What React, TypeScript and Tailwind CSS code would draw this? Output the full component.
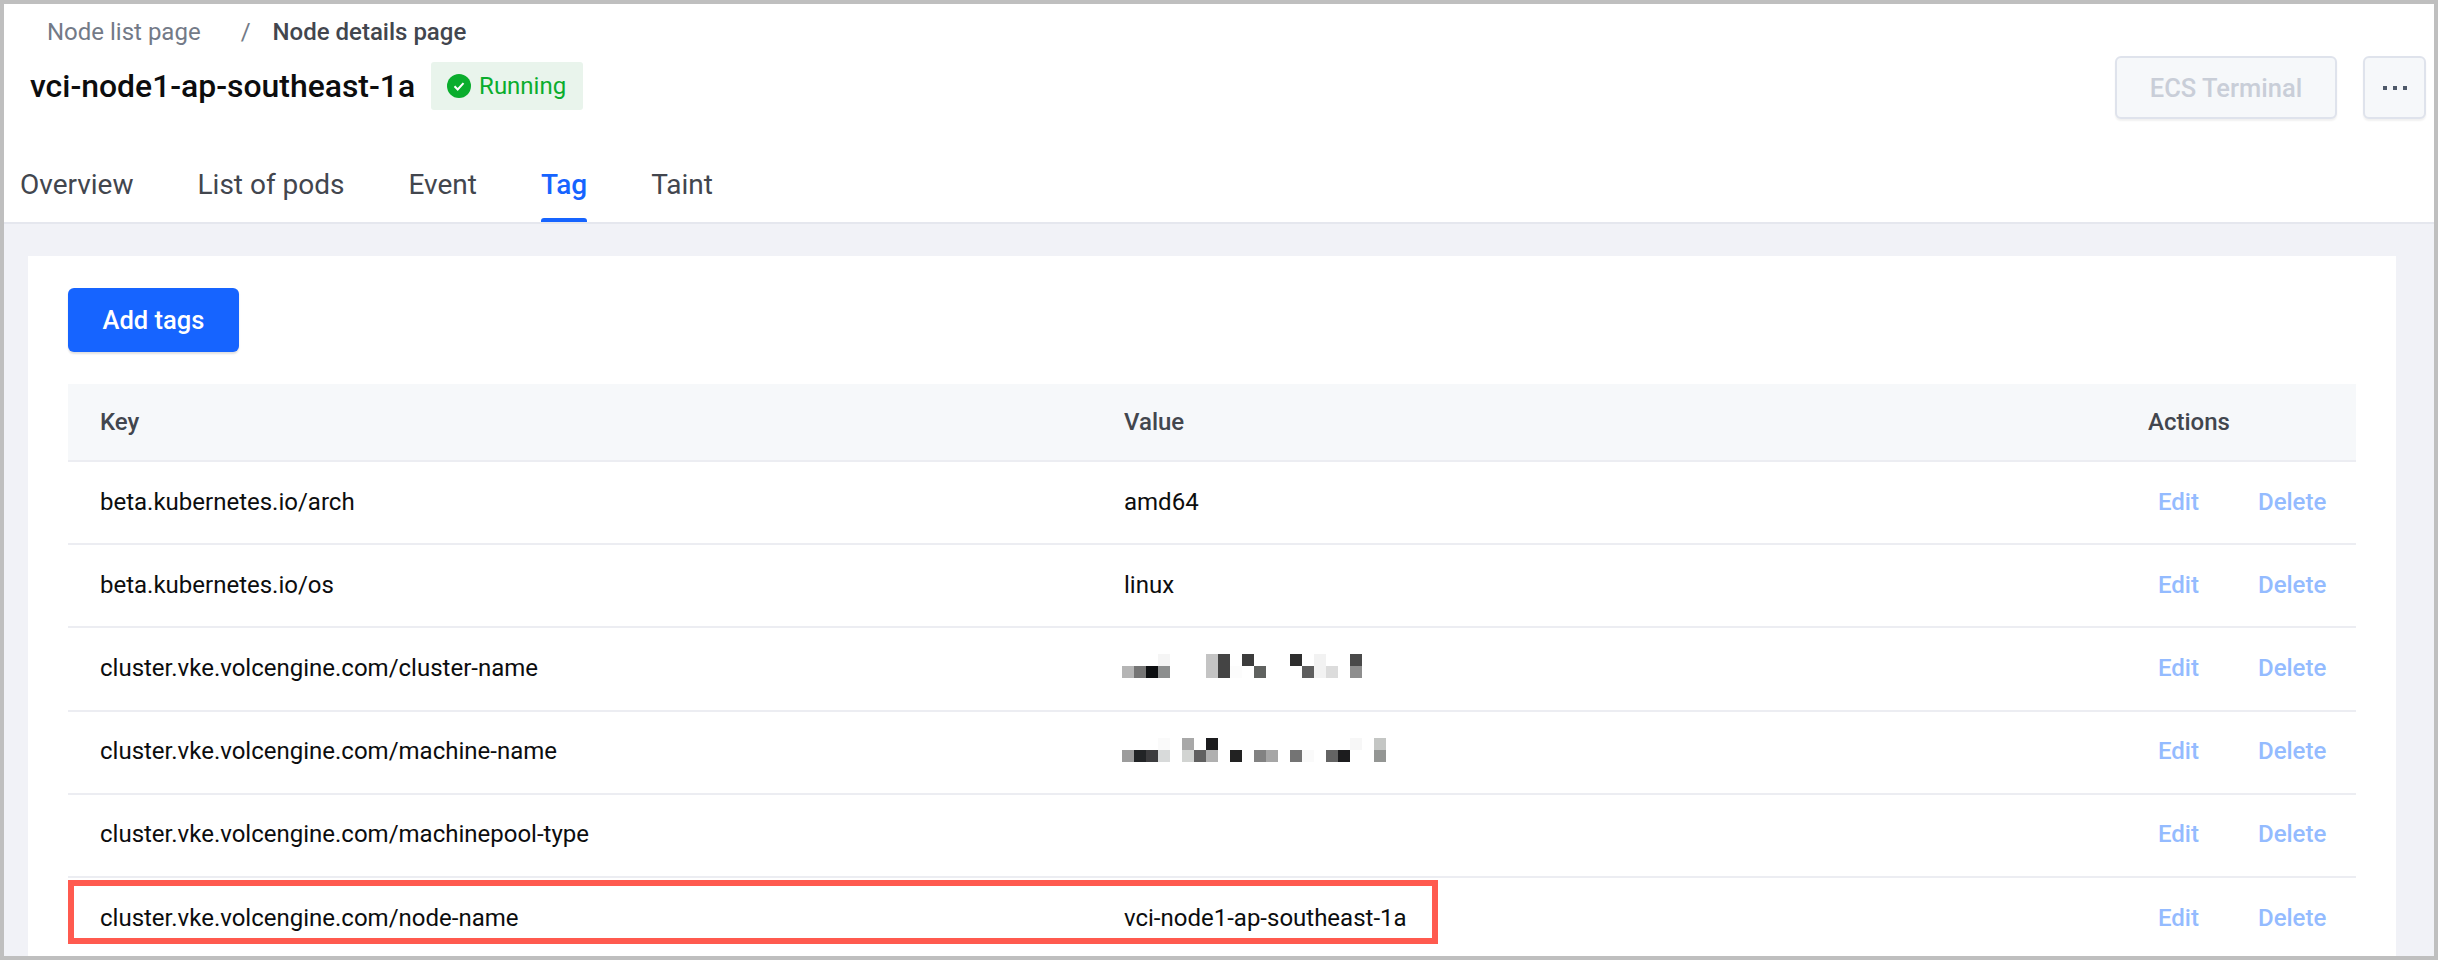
const rows = [
  { key: "beta.kubernetes.io/arch", value: "amd64" },
  { key: "beta.kubernetes.io/os", value: "linux" },
  { key: "cluster.vke.volcengine.com/cluster-name", mosaic: "a" },
  { key: "cluster.vke.volcengine.com/machine-name", mosaic: "b" },
  { key: "cluster.vke.volcengine.com/machinepool-type", value: "" },
  { key: "cluster.vke.volcengine.com/node-name", value: "vci-node1-ap-southeast-1a", marked: true },
]

// blurred values: [column, row, grey]
const mosaics: Record<string, [number, number, string][]> = {
  a: [
    [3, 0, "#f5f5f5"], [7, 0, "#c4c4c4"], [8, 0, "#444444"], [10, 0, "#3c3c3c"], [14, 0, "#2e2e2e"], [16, 0, "#f2f2f2"], [19, 0, "#4a4a4a"],
    [0, 1, "#b5b5b5"], [1, 1, "#757575"], [2, 1, "#0d0f11"], [3, 1, "#8c8e8e"], [7, 1, "#c4c4c4"], [8, 1, "#444444"], [9, 1, "#fcfcfc"],
    [11, 1, "#606260"], [15, 1, "#5e5e5e"], [16, 1, "#f2f2f2"], [17, 1, "#dcdcdc"], [19, 1, "#8e8e8e"],
  ],
  b: [
    [3, 0, "#fafafa"], [5, 0, "#a8a8a8"], [7, 0, "#1c1c1e"], [19, 0, "#f7f7f7"], [21, 0, "#c4c6c4"],
    [0, 1, "#9c9c9c"], [1, 1, "#222426"], [2, 1, "#3c3c3e"], [3, 1, "#d8dada"], [5, 1, "#d2d4d2"], [6, 1, "#606060"], [7, 1, "#b0b0b0"],
    [9, 1, "#222222"], [11, 1, "#828282"], [12, 1, "#a6a6a6"], [14, 1, "#747474"], [15, 1, "#fafafa"], [17, 1, "#646464"], [18, 1, "#1c1c1e"], [21, 1, "#949694"],
  ],
}

function Mosaic({ name }: { name: string }) {
  return (
    <svg width="264" height="24" viewBox="0 0 264 24" shapeRendering="crispEdges" className="-mt-[3px] -ml-[2px] block">
      {mosaics[name].map(([c, r, fill]) => (
        <rect key={c + "-" + r} x={c * 12} y={r * 12} width="12" height="12" fill={fill} />
      ))}
    </svg>
  )
}

const tabs = ["Overview", "List of pods", "Event", "Tag", "Taint"]

export default function App() {
  return (
    <div className="h-[960px] overflow-hidden border-4 border-[#bfbfbf] bg-[#f1f2f7] font-['Roboto',sans-serif]">
      <header className="relative h-[220px] border-b-2 border-[#e5e7ee] bg-white">
        <nav className="flex h-[44px] items-center pt-[12px] pl-[43px] text-[24px] leading-[32px]">
          <span className="text-[#737a87]">Node list page</span>
          <span className="ml-[40px] text-[#737a87]">/</span>
          <span className="ml-[22px] font-medium text-[#42464e]">Node details page</span>
        </nav>
        <div className="mt-[14px] flex items-center pl-[26px]">
          <h1 className="text-[31.9px] leading-[48px] font-medium text-[#0c0d0e]">vci-node1-ap-southeast-1a</h1>
          <span className="ml-[16px] flex h-[48px] w-[152px] items-center gap-[8px] rounded-[3px] bg-[#e9f4ec] pl-[16px] text-[24px] text-[#0aad2d]">
            <svg width="24" height="24" viewBox="0 0 24 24" className="shrink-0">
              <circle cx="12" cy="12" r="12" fill="#0aad2d" />
              <path d="M7.5 12.3l3.2 3.2 5.8-6.4" fill="none" stroke="#fff" strokeWidth="2" />
            </svg>
            Running
          </span>
          <div className="absolute top-[52px] right-[8px] flex gap-[26px]">
            <button className="h-[63px] w-[222px] rounded-[6px] border-2 border-[#dfe3ec] bg-[#f6f8fa] pt-[1px] text-[25.5px] font-medium text-[#c9ced8] shadow-[0_2px_2px_rgba(0,0,0,0.06)]">
              ECS Terminal
            </button>
            <button className="flex h-[63px] w-[63px] items-center justify-center gap-[6px] rounded-[6px] border-2 border-[#dfe3ec] bg-[#f6f8fa] shadow-[0_2px_2px_rgba(0,0,0,0.06)]">
              <span className="size-[4px] bg-[#4e5969]" />
              <span className="size-[4px] bg-[#4e5969]" />
              <span className="size-[4px] bg-[#4e5969]" />
            </button>
          </div>
        </div>
        <div className="absolute bottom-0 left-[16px] flex gap-[64px]">
          {tabs.map((t) => (
            <div
              key={t}
              className={
                t === "Tag"
                  ? "relative h-[64px] text-[28px] leading-[53px] font-medium text-[#1664ff]"
                  : "relative h-[64px] text-[28px] leading-[53px] text-[#42464e]"
              }
            >
              {t}
              {t === "Tag" && <div className="absolute inset-x-0 bottom-0 h-[4px] rounded-t-[3px] bg-[#1664ff]" />}
            </div>
          ))}
        </div>
      </header>
      <main className="mt-[32px] mr-[38px] ml-[24px] h-[800px] bg-white px-[40px] pt-[32px]">
        <button className="h-[64px] w-[171px] rounded-[6px] bg-[#1664ff] text-[25.5px] font-medium text-white shadow-[0_2px_2px_rgba(0,0,0,0.12)]">
          Add tags
        </button>
        <div className="mt-[32px] flex h-[76px] items-center bg-[#f6f8fa] text-[24px] font-medium text-[#42464e]">
          <div className="w-[1056px] pl-[32px]">Key</div>
          <div className="w-[1024px]">Value</div>
          <div>Actions</div>
        </div>
        {rows.map((r) => (
          <div key={r.key} className="relative flex h-[83.2px] items-center border-t-2 border-[#ecedf2] pb-[2px] text-[24px] text-[#0c0d0e]">
            <div className="w-[1056px] pl-[32px]">{r.key}</div>
            <div className="w-[1034px]">{r.mosaic ? <Mosaic name={r.mosaic} /> : r.value}</div>
            <div className="flex gap-[59px] text-[24px] font-medium text-[#94bbff]">
              <span>Edit</span>
              <span>Delete</span>
            </div>
            {r.marked && <div className="absolute top-[2px] left-0 h-[64px] w-[1370px] border-[6px] border-[#ff5a4f]" />}
          </div>
        ))}
      </main>
    </div>
  )
}
